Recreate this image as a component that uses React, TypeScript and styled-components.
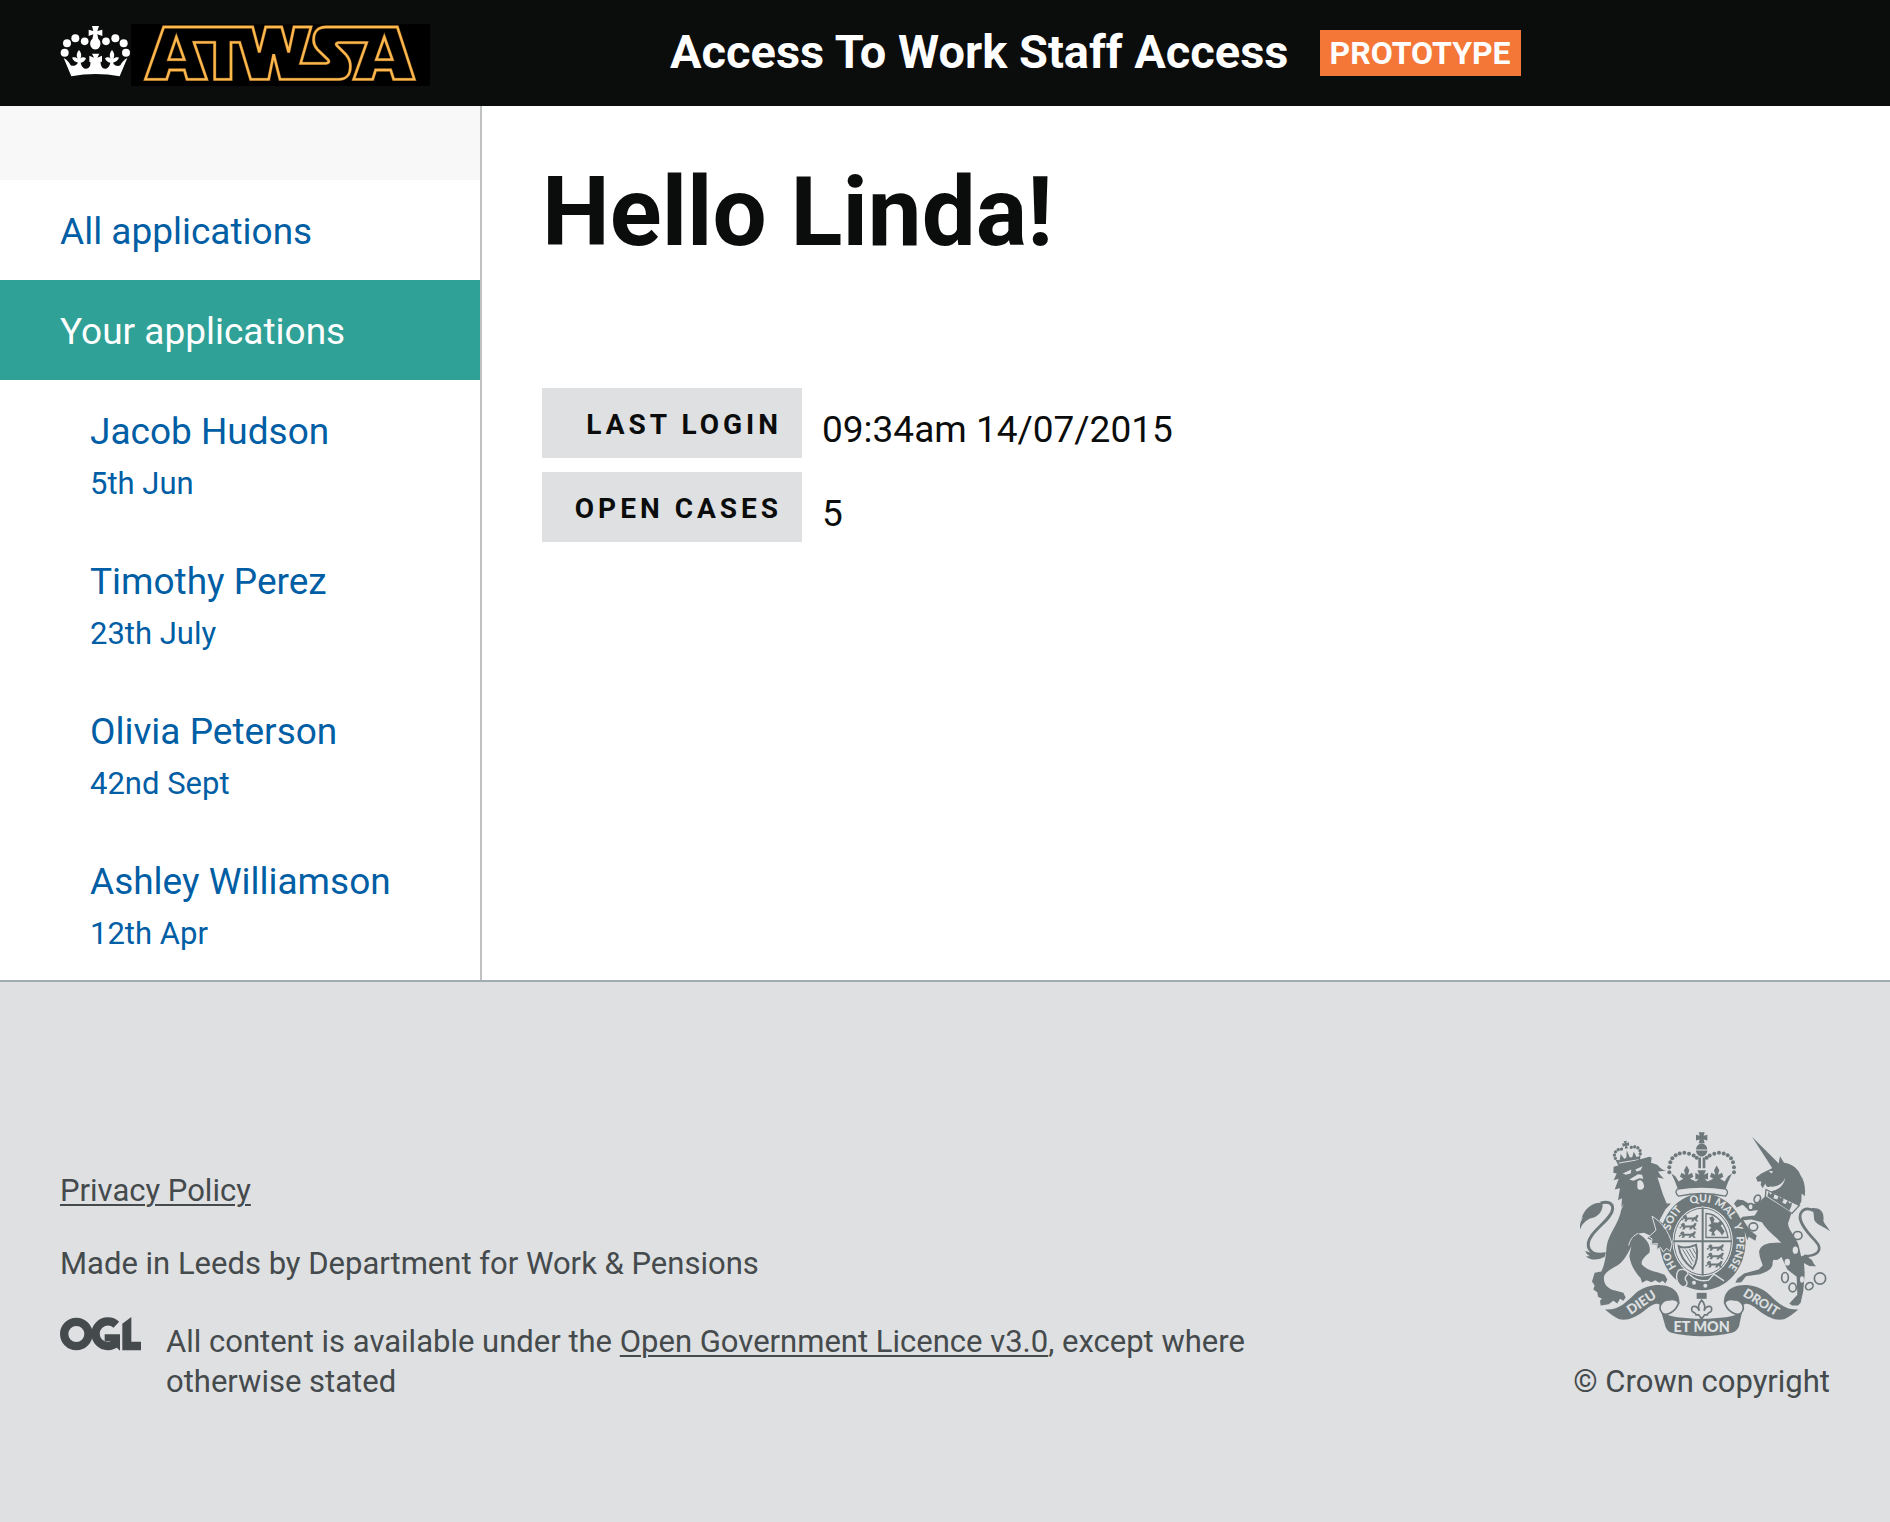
import React from "react";
import styled, { createGlobalStyle } from "styled-components";

const color = {
  black: "#0b0c0c",
  link: "#005ea5",
  teal: "#2fa197",
  orange: "#f47738",
  panel: "#dee0e2",
  border: "#bfc1c3",
  footerBorder: "#a1acb2",
  footerText: "#454a4c",
  crest: "#6e787b",
};

const GlobalStyle = createGlobalStyle`
  *, *::before, *::after { box-sizing: border-box; }
  body {
    margin: 0;
    background: #fff;
    color: ${color.black};
    font-family: Roboto, "Liberation Sans", sans-serif;
    -webkit-font-smoothing: antialiased;
  }
`;

const Page = styled.div`
  min-height: 100vh;
  display: flex;
  flex-direction: column;
`;

const Header = styled.header`
  display: flex;
  align-items: flex-start;
  padding: 24px 60px 20px;
  background: ${color.black};
  color: #fff;
`;

const LogoLink = styled.a`
  flex: 0 0 calc((100% + 60px) / 3);
  display: flex;
`;

const Proposition = styled.div`
  display: flex;
  align-items: flex-start;
  gap: 31px;
  padding-top: 6px;
`;

const ServiceName = styled.span`
  font-size: 47px;
  line-height: 44px;
  font-weight: 700;
`;

const PhaseTag = styled.strong`
  padding: 0 10px;
  background: ${color.orange};
  font-size: 32px;
  line-height: 46px;
  font-weight: 700;
`;

const Columns = styled.div`
  display: flex;
`;

const Sidebar = styled.nav`
  flex: 0 0 482px;
  border-right: 2px solid ${color.border};
`;

const SidebarTop = styled.div`
  height: 74px;
  background: #f8f8f8;
`;

const NavList = styled.ul`
  list-style: none;
  margin: 0;
  padding: 0;
`;

const NavLink = styled.a<{ $active?: boolean }>`
  display: block;
  padding: 32px 20px 28px 60px;
  font-size: 37px;
  line-height: 40px;
  text-decoration: none;
  color: ${(p) => (p.$active ? "#fff" : color.link)};
  background: ${(p) => (p.$active ? color.teal : "transparent")};
`;

const CaseLink = styled.a`
  display: flex;
  flex-direction: column;
  gap: 12px;
  padding: 32px 20px 26px 90px;
  font-size: 37px;
  line-height: 40px;
  text-decoration: none;
  color: ${color.link};
`;

const CaseDate = styled.span`
  font-size: 31px;
`;

const Main = styled.main`
  flex: 1;
  padding: 56px 60px;
`;

const Greeting = styled.h1`
  margin: 0 0 126px;
  font-size: 96px;
  line-height: 100px;
  font-weight: 700;
`;

const Stats = styled.dl`
  display: grid;
  grid-template-columns: 260px 1fr;
  gap: 14px 20px;
  margin: 0;
`;

const StatLabel = styled.dt`
  padding-right: 20px;
  background: ${color.panel};
  font-size: 28px;
  line-height: 74px;
  height: 70px;
  font-weight: 700;
  letter-spacing: 4px;
  text-align: right;
  text-transform: uppercase;
`;

const StatValue = styled.dd`
  margin: 0;
  padding-top: 20px;
  font-size: 37px;
  line-height: 43px;
`;

const Footer = styled.footer`
  flex: 1;
  display: flex;
  align-items: flex-start;
  padding: 150px 60px 118px;
  border-top: 2px solid ${color.footerBorder};
  background: ${color.panel};
  color: ${color.footerText};
  font-size: 31px;
  line-height: 40px;
`;

const FooterRow = styled.div`
  flex: 1;
  display: flex;
  align-items: flex-end;
  justify-content: space-between;
`;

const FooterMeta = styled.div`
  flex: 0 1 70%;
`;

const FooterLine = styled.p`
  margin: 0 0 33px;
`;

const Licence = styled.div`
  display: flex;
  align-items: flex-start;
  gap: 25px;

  svg { flex: none; }
  p { margin: 0; padding-top: 5px; }
`;

const FooterLink = styled.a`
  color: inherit;
  text-decoration: underline;
  text-decoration-thickness: 2px;
  text-underline-offset: 3px;
`;

const Copyright = styled.a`
  display: flex;
  flex-direction: column;
  align-items: flex-end;
  gap: 25px;
  color: inherit;
  text-decoration: none;
  white-space: nowrap;
`;

const markOutline =
  "M286 208L341 51H608L628 127L647 51H695L716 127L732 51H783L752 160H828Q842 158 833 148L802 118Q790 104 791 88C791 65 805 51 828 51H1042L1093 208H1031L1022 180H977L968 208H911L950 98H865Q855 100 861 107L888 134Q902 150 901 170C901 192 890 208 866 208H690L671 133L656 208H602L569 97H543V208H494V97H432L470 208H411L403 180H359L350 208Z";
const markCounters = "M379 81L356 149H403ZM1003 81L979 149H1027Z";

/* Royal crown followed by the outlined service mark */
const HeaderLogo = () => (
  <svg width="370" height="62" viewBox="30 42 1110 186" role="img" aria-label="ATWSA">
    <rect x="243" y="42" width="897" height="186" fill="#000" />
    <g fill="#fff">
      <circle cx="44" cy="128" r="12" />
      <circle cx="51" cy="100" r="12" />
      <circle cx="76" cy="85" r="12" />
      <circle cx="104" cy="94" r="11.500" />
      <circle cx="168" cy="94" r="11.500" />
      <circle cx="196" cy="85" r="12" />
      <circle cx="221" cy="100" r="12" />
      <circle cx="228" cy="128" r="12" />
      <path d="M126 48h21l-5 15 15-4v19l-15-5 3 14c8 6 8 18 3 25-5 9-19 9-24 0-5-7-5-19 3-25l3-14-14 5V59l14 4z" />
      <path d="M41 144C52 150 58 158 62 166C70 170 80 166 84 158C77 156 70 152 66 143C74 140 80 142 83 146C78 138 80 128 87 120C94 128 96 138 91 146C95 141 103 140 108 145C105 153 100 157 92 158C95 174 106 180 115 174C121 170 122 164 121 154L132 150L118 156V137L132 143L126 131H148L142 143L156 137V156L142 150L152 154C151 164 154 170 158 174C167 180 178 174 181 158C173 157 168 153 165 145C170 140 178 141 182 146C177 138 179 128 186 120C193 128 195 138 190 146C194 142 201 140 207 143C203 152 196 156 189 158C193 167 203 170 211 166C215 158 221 150 232 144L209 199Q137 185 64 199Z" />
    </g>
    <g fill="none" stroke="#6b4512" strokeWidth="10">
      <path d={markOutline} />
      <path d={markCounters} />
    </g>
    <g fill="none" stroke="#ffb84d" strokeWidth="7">
      <path d={markOutline} />
      <path d={markCounters} />
    </g>
  </svg>
);

const OglLogo = () => (
  <svg width="81" height="34" viewBox="30 27 243 102" role="img" aria-label="Open Government Licence">
    <g fill="none" stroke={color.footerText}>
      <circle cx="79" cy="78" r="36.500" strokeWidth="25" />
      <path d="M199 50A37 37 0 1 0 199 104" strokeWidth="25" />
    </g>
    <path fill={color.footerText} d="M164 79H210V128L196 115L180 100H164ZM217 47L244 27V101H273V127H217Z" />
  </svg>
);

/* One half of the motto ribbon with its fold; the other half mirrors it */
const RibbonHalf = () => (
  <>
    <path d="M105 568C150 570 168 545 200 516C232 493 272 489 300 501C322 510 330 530 328 552C322 540 308 535 294 538C281 541 272 550 272 556C258 542 240 558 220 574C192 594 172 602 148 597C134 592 120 580 105 568Z" />
    <path d="M300 538C275 540 260 560 278 580C290 588 318 575 326 548C322 538 308 535 294 540" fill="none" stroke={color.crest} strokeWidth="5" />
  </>
);

const archDots: [number, number][] = [
  [298, 156], [298, 141], [301, 126], [307, 114], [317, 105],
  [329, 100], [343, 98], [357, 101], [371, 106], [380, 113],
];

const smallCrownDots: [number, number][] = [
  [134, 108], [133, 98], [138, 89], [147, 84], [157, 84],
  [187, 84], [197, 84], [206, 89], [211, 98], [210, 108],
];

/* A walking lion charge, repeated three times in each English quarter */
const PassantLion = ({ x, y }: { x: number; y: number }) => (
  <path
    transform={`translate(${x} ${y})`}
    d="M2 6L9 0L15 3L14 8H34L42 4L44 0L50 2L47 9L44 14L50 20H42L38 14L34 20L27 20L31 14H17L14 20H6L10 14L6 12L0 18L-2 13L5 10Z"
  />
);

const RoyalArms = () => (
  <svg width="250" height="205" viewBox="30 36 750 614" role="img" aria-label="Royal coat of arms">
    <g fill={color.crest}>
      {/* lion's crown */}
      <g transform="rotate(-10 172 100)">
        {smallCrownDots.map(([x, y]) => (
          <circle key={`${x}-${y}`} cx={x} cy={y} r="5" />
        ))}
        <path d="M167 62h10l-3 7 8-2v11l-8-2 3 9h-10l3-9-8 2V67l8 2z" />
        <path d="M134 112L146 116L152 98L160 114L167 112L172 90L177 112L184 114L192 98L198 116L210 112L204 134H140Z" />
        <path d="M142 124H202" stroke={color.panel} strokeWidth="3" />
      </g>
      {/* lion's tail */}
      <path d="M104 402C58 408 42 378 66 345C88 315 126 292 128 266C129 248 112 242 92 249" fill="none" stroke={color.crest} strokeWidth="9" />
      <path d="M30 328C28 305 38 298 38 290C32 294 32 294 34 296C42 270 62 246 96 248C102 262 92 284 72 292C56 294 38 306 30 328Z" />
      <path d="M46 392C56 398 70 400 108 396L104 410C88 420 60 422 48 408L60 408C52 404 48 400 46 392Z" />
      {/* lion */}
      <path d="M131 140L238 110L245 112L243 128L262 134C270 144 278 150 288 152L264 154C270 164 276 170 282 176L262 172C270 190 272 208 290 250L303 250L286 268L268 302C290 318 302 340 306 370L302 392L292 396L286 386L278 394L272 384L262 388L260 374L242 372L244 360L232 354L240 346L222 338L204 340C232 356 244 378 238 398C220 412 212 424 216 434C228 446 240 452 262 456L284 464L292 478L286 490L278 482L268 488L256 480L244 486L230 480L216 488L212 474C194 456 182 432 178 408L184 378C174 400 160 424 142 436C122 446 104 458 102 470C100 490 110 500 124 508L160 518L167 532L160 542L150 536L142 550L130 542L116 552L92 556L90 542L96 536L84 530L82 516L70 508L74 496L66 484L74 458L94 454C106 430 108 400 110 378C116 340 146 312 154 268L162 250L154 262L156 234L144 240L150 204L134 208L146 176L131 180L140 160L130 158Z" />
      <g fill={color.panel}>
        <path d="M158 160L184 148L182 160L168 164ZM196 148L218 138L212 150L200 154Z" />
        <path d="M178 178L204 162L216 164L220 176L208 174L190 182Z" />
        <path d="M202 184C210 176 220 182 222 196C224 210 204 214 202 202Z" />
      </g>
      <path d="M176 376C182 352 192 346 204 340" fill="none" stroke={color.panel} strokeWidth="3" />

      {/* unicorn */}
      <g transform="translate(390 0)">
        <path d="M156 50L240 134L218 146Z" />
        <path d="M216 144L236 130L240 108L252 128C276 130 296 148 302 166C312 180 318 204 314 228L305 220L304 244L294 262L210 212L214 196C206 206 198 200 196 190L188 204L182 194L184 184L172 184L168 172L184 160Z" />
        <path d="M206 152L220 154L214 160Z M190 196C212 208 250 196 256 172C254 190 240 210 210 214Z" fill={color.panel} />
        <path d="M198 208L298 256L276 280L196 230Z" fill={color.panel} stroke={color.crest} strokeWidth="4" />
        <path d="M202 228L206 214L212 224L218 216L224 222L220 234L232 238L236 226L242 234L250 230L250 242L246 246L256 252L264 240L268 250L276 246L274 258L268 272Z" />
        <path d="M196 228L274 280L264 310C266 334 292 352 298 384L304 412L346 436L330 438L312 428L314 460L310 512L302 548L294 556L276 556L268 550L292 524L290 470L262 448L244 410C226 432 212 408 186 412L178 396C182 374 214 366 244 368C224 346 200 330 186 306L154 298L130 300L150 330L170 346L166 362L146 350L142 360L136 340L114 302L128 290L164 286L174 270L148 272L128 254L110 262L102 250L112 238L130 240L152 254L176 246Z" />
        <path d="M178 392C184 370 214 362 262 372L256 406C232 412 216 414 218 430C218 446 200 456 180 462L138 468L124 486L106 488L112 476L132 460L176 448L188 436C186 424 176 410 178 392Z" />
        <path d="M312 408C352 408 372 390 346 362C312 326 290 296 304 276C312 264 326 264 342 272" fill="none" stroke={color.crest} strokeWidth="8" />
        <path d="M334 264C360 262 374 274 370 302C374 314 384 322 391 334C370 318 350 314 344 302C340 290 344 276 334 264Z" />
        <path d="M318 404L330 416C340 420 338 430 348 438C326 440 306 430 300 410Z" />
        {/* chain */}
        <g fill="none" stroke={color.crest} strokeWidth="5">
          <ellipse cx="172" cy="236" rx="9" ry="12" transform="rotate(25 172 236)" />
          <ellipse cx="255" cy="472" rx="10" ry="15" />
          <ellipse cx="278" cy="502" rx="11" ry="13" />
          <ellipse cx="328" cy="498" rx="12" ry="10" transform="rotate(-40 328 498)" />
          <circle cx="360" cy="475" r="17" />
          <ellipse cx="293" cy="346" rx="13" ry="12" fill={color.panel} />
          <ellipse cx="160" cy="320" rx="13" ry="12" fill={color.panel} />
          <ellipse cx="152" cy="260" rx="8" ry="10" fill={color.panel} />
        </g>
        <g fill={color.panel}>
          <ellipse cx="286" cy="390" rx="8" ry="11" />
          <ellipse cx="262" cy="426" rx="8" ry="10" />
          <ellipse cx="306" cy="478" rx="6" ry="10" />
        </g>
      </g>

      {/* imperial crown */}
      <path d="M386 36h18l-3 11 11-3v17l-11-3 3 11h-18l3-11-11 3v-17l11 3zM378 88a17 18 0 0 1 34 0zM378 91h34c0 10-8 18-17 18s-17-8-17-18z" />
      {archDots.map(([x, y]) => (
        <React.Fragment key={`${x}-${y}`}>
          <circle cx={x} cy={y} r="6" />
          <circle cx={790 - x} cy={y} r="6" />
        </React.Fragment>
      ))}
      <path d="M385 112h8v32h-8zM398 112h8v32h-8z" />
      <path d="M304 160L316 168L326 184L340 176L330 170L334 158L346 164L342 150L350 136L358 150L354 164L366 158L370 170L360 176L378 184L386 176L376 178V158L388 164L382 150H408L402 164L414 158V178L404 176L412 184L430 176L420 170L424 158L436 164L432 150L440 136L448 150L444 164L456 158L460 170L450 176L464 184L474 168L486 160L474 186L466 208Q395 194 324 208L316 186Z" />

      {/* garter */}
      <path fillRule="evenodd" d="M398 220A129 145 0 0 1 398 510A129 145 0 0 1 398 220ZM398 260A90 104 0 0 0 398 468A90 104 0 0 0 398 260Z" />
      <path d="M322 207Q395 194 468 207Q478 217 466 228Q395 212 326 228Q312 217 322 207Z" fill={color.panel} stroke={color.crest} strokeWidth="4" />
      <ellipse cx="398" cy="364" rx="90" ry="105" fill={color.panel} />
      <ellipse cx="398" cy="364" rx="86" ry="100" fill="none" stroke={color.crest} strokeWidth="3" />
      <path d="M395 262h6v204h-6zM310 360h176v6H310z" />
      {/* quarterings */}
      <PassantLion x={336} y={284} />
      <PassantLion x={330} y={308} />
      <PassantLion x={328} y={333} />
      <PassantLion x={412} y={372} />
      <PassantLion x={412} y={397} />
      <PassantLion x={408} y={422} />
      <path d="M408 280C436 280 466 306 474 352H408Z" fill="none" stroke={color.crest} strokeWidth="4" />
      <path d="M418 292L428 288L434 298L430 306L444 308L452 300L460 310L452 316L464 334L456 346L450 336L440 328L432 336L436 346H424L426 336L416 332L424 322L414 316L424 310Z" />
      <path d="M326 378Q344 388 378 374C386 400 380 430 368 446C350 432 330 410 326 378Z" fill="none" stroke={color.crest} strokeWidth="6" />
      <path d="M338 388L366 434M348 388L370 424M358 386L374 414M368 384L378 402" stroke={color.crest} strokeWidth="3" />
      {/* strap and buckle */}
      <path d="M358 462C376 480 398 484 416 480L432 462L462 482" fill="none" stroke={color.panel} strokeWidth="4" />
      <path d="M326 450C340 444 356 452 354 462C346 468 342 476 350 484C354 494 344 504 334 498C318 488 316 462 326 450Z" stroke={color.panel} strokeWidth="4" />
      <g fill={color.panel}>
        <circle cx="372" cy="488" r="6" />
        <circle cx="406" cy="497" r="6" />
      </g>
      {/* lion's paw over the garter */}
      <path d="M246 288C272 304 296 330 306 372L300 394L290 384L280 396L272 382L260 388L262 370L244 372L246 356L236 350L258 330Z" stroke={color.panel} strokeWidth="3" />

      {/* fleur-de-lis */}
      <path d="M380 518h30v18h-30z" />
      <path d="M395 540C406 552 406 562 402 572C410 552 430 556 424 572C420 580 412 576 412 584H404L395 596L386 584H378C378 576 370 580 366 572C360 556 380 552 388 572C384 562 384 552 395 540Z" fill={color.panel} stroke={color.crest} strokeWidth="5" />

      {/* motto ribbon */}
      <RibbonHalf />
      <g transform="matrix(-1 0 0 1 790 0)">
        <RibbonHalf />
      </g>
      <path d="M274 576C310 602 480 602 516 576L507 618Q502 632 486 638C430 652 360 652 304 638Q290 632 286 618Z" />
    </g>

    <defs>
      <path id="garter-line" d="M398 482A102 118 0 0 1 398 246A102 118 0 0 1 398 482" />
    </defs>
    <g fill={color.panel} fontFamily="Lato, sans-serif" fontWeight="900" fontSize="32" textAnchor="middle">
      <text><textPath href="#garter-line" startOffset="17%">HO</textPath></text>
      <text><textPath href="#garter-line" startOffset="35%">SOIT</textPath></text>
      <text><textPath href="#garter-line" startOffset="49%">QUI</textPath></text>
      <text><textPath href="#garter-line" startOffset="60%">MAL</textPath></text>
      <text><textPath href="#garter-line" startOffset="69%">Y</textPath></text>
      <text><textPath href="#garter-line" startOffset="80%">PENSE</textPath></text>
      <text fontSize="40" transform="translate(222 558) rotate(-34)">DIEU</text>
      <text fontSize="38" transform="translate(567 557) rotate(32)">DROIT</text>
      <text fontSize="43" x="395" y="636">ET MON</text>
    </g>
  </svg>
);

const cases = [
  { name: "Jacob Hudson", date: "5th Jun" },
  { name: "Timothy Perez", date: "23th July" },
  { name: "Olivia Peterson", date: "42nd Sept" },
  { name: "Ashley Williamson", date: "12th Apr" },
];

export default function App() {
  return (
    <Page>
      <GlobalStyle />
      <Header>
        <LogoLink href="#">
          <HeaderLogo />
        </LogoLink>
        <Proposition>
          <ServiceName>Access To Work Staff Access</ServiceName>
          <PhaseTag>PROTOTYPE</PhaseTag>
        </Proposition>
      </Header>

      <Columns>
        <Sidebar aria-label="Applications">
          <SidebarTop />
          <NavList>
            <li><NavLink href="#all">All applications</NavLink></li>
            <li>
              <NavLink href="#yours" $active aria-current="page">Your applications</NavLink>
              <NavList>
                {cases.map((c) => (
                  <li key={c.name}>
                    <CaseLink href="#case">
                      <span>{c.name}</span>
                      <CaseDate>{c.date}</CaseDate>
                    </CaseLink>
                  </li>
                ))}
              </NavList>
            </li>
          </NavList>
        </Sidebar>

        <Main>
          <Greeting>Hello Linda!</Greeting>
          <Stats>
            <StatLabel>Last login</StatLabel>
            <StatValue>09:34am 14/07/2015</StatValue>
            <StatLabel>Open cases</StatLabel>
            <StatValue>5</StatValue>
          </Stats>
        </Main>
      </Columns>

      <Footer>
        <FooterRow>
          <FooterMeta>
            <FooterLine><FooterLink href="#privacy">Privacy Policy</FooterLink></FooterLine>
            <FooterLine>Made in Leeds by Department for Work &amp; Pensions</FooterLine>
            <Licence>
              <OglLogo />
              <p>
                All content is available under the{" "}
                <FooterLink href="#licence">Open Government Licence v3.0</FooterLink>, except where otherwise stated
              </p>
            </Licence>
          </FooterMeta>
          <Copyright href="#copyright">
            <RoyalArms />
            <span>© Crown copyright</span>
          </Copyright>
        </FooterRow>
      </Footer>
    </Page>
  );
}
